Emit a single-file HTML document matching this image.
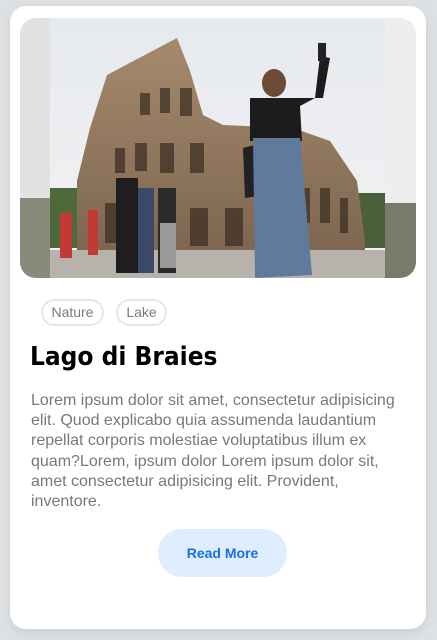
<!DOCTYPE html>
<html><head><meta charset="utf-8"><style>
html,body{margin:0;padding:0}
body{width:437px;height:640px;background:#dde1e3;position:relative;overflow:hidden;font-family:"Liberation Sans",sans-serif}
.card{position:absolute;left:10px;top:6px;width:416px;height:623px;background:#fff;border-radius:16px;box-shadow:0 4px 10px rgba(0,0,0,.08)}
.img{position:absolute;left:20px;top:18px;width:396px;height:260px;border-radius:16px;overflow:hidden}
.tag{position:absolute;top:299px;height:23px;border:2px solid #e6e6e6;border-radius:14px;font-size:14px;color:#7a7a7a;line-height:23px;text-align:center;box-sizing:content-box}
h1{position:absolute;left:30px;top:342px;margin:0;font-family:"DejaVu Sans Condensed","DejaVu Sans",sans-serif;font-stretch:condensed;font-weight:bold;font-size:26px;color:#000;letter-spacing:0}
p{position:absolute;left:31px;top:391px;width:370px;margin:0;font-size:16px;line-height:20.2px;color:#787878}
.btn{position:absolute;left:158px;top:529px;width:129px;height:48px;border-radius:24px;background:#dfeeff;color:#1a6fe6;font-weight:bold;font-size:14px;text-align:center;line-height:48px}
</style></head><body>
<div class="card"></div>
<div class="img">
<svg width="396" height="260" viewBox="0 0 396 260">
<defs><linearGradient id="sky" x1="0" y1="0" x2="0" y2="1"><stop offset="0" stop-color="#e6e9ee"/><stop offset="1" stop-color="#f3f3f3"/></linearGradient>
<linearGradient id="col" x1="0" y1="0" x2="0" y2="1"><stop offset="0" stop-color="#a58a6c"/><stop offset="1" stop-color="#7e6651"/></linearGradient></defs>
<rect width="396" height="260" fill="url(#sky)"/>
<rect x="0" y="0" width="30" height="260" fill="#e2e2e2"/>
<rect x="0" y="180" width="30" height="80" fill="#8a8a7a"/>
<rect x="365" y="0" width="31" height="260" fill="#eeeeee"/>
<rect x="365" y="185" width="31" height="75" fill="#7a7a6a"/>
<rect x="30" y="170" width="30" height="60" fill="#4f6a3a"/>
<rect x="330" y="175" width="35" height="55" fill="#4a5f3a"/>
<polygon points="57,163 70,110 87,57 157,20 170,53 183,97 203,107 273,110 310,123 337,163 345,223 345,232 57,232" fill="url(#col)"/>
<g fill="#3e3024" opacity=".75">
<rect x="95" y="130" width="10" height="25"/><rect x="115" y="125" width="12" height="28"/><rect x="140" y="125" width="14" height="30"/><rect x="170" y="125" width="14" height="30"/>
<rect x="120" y="75" width="10" height="22"/><rect x="140" y="70" width="10" height="25"/><rect x="160" y="70" width="12" height="28"/>
<rect x="85" y="185" width="12" height="40"/><rect x="170" y="190" width="18" height="38"/><rect x="205" y="190" width="18" height="38"/><rect x="280" y="170" width="10" height="35"/><rect x="300" y="170" width="10" height="35"/><rect x="320" y="180" width="8" height="35"/>
</g>
<rect x="30" y="232" width="335" height="28" fill="#b7b2ab"/>
<rect x="40" y="195" width="12" height="45" fill="#c23a33"/>
<rect x="68" y="192" width="10" height="45" fill="#c23a33"/>
<rect x="96" y="160" width="22" height="95" fill="#1e1e1e"/>
<rect x="118" y="170" width="16" height="85" fill="#3b4a6a"/>
<rect x="138" y="170" width="18" height="85" fill="#2a2a2a"/>
<rect x="140" y="205" width="16" height="45" fill="#999"/>
<ellipse cx="254" cy="65" rx="12" ry="14" fill="#6b4a36"/>
<polygon points="230,80 303,80 310,40 300,38 295,80 280,88 282,123 230,123" fill="#1c1c1c"/>
<rect x="298" y="25" width="8" height="18" fill="#222"/>
<polygon points="223,130 262,120 263,175 225,180" fill="#222"/>
<polygon points="233,120 280,120 292,257 235,260" fill="#5f7a9c"/>
</svg>
</div>
<div class="tag" style="left:41px;width:59px">Nature</div>
<div class="tag" style="left:116px;width:47px">Lake</div>
<h1>Lago di Braies</h1>
<p>Lorem ipsum dolor sit amet, consectetur adipisicing elit. Quod explicabo quia assumenda laudantium repellat corporis molestiae voluptatibus illum ex quam?Lorem, ipsum dolor Lorem ipsum dolor sit, amet consectetur adipisicing elit. Provident, inventore.</p>
<div class="btn">Read More</div>
</body></html>
